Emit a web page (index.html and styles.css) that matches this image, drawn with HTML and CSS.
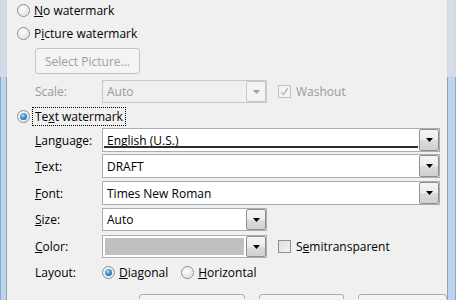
FILE: index.html
```html
<!DOCTYPE html>
<html>
<head>
<meta charset="utf-8">
<link rel="stylesheet" href="styles.css">
</head>
<body>
<div class="window">
  <div class="frame frame-left"></div>
  <div class="content">
    <div class="row r-no"><span class="radio"></span><span class="lbl"><u>N</u>o watermark</span></div>
    <div class="row r-pic"><span class="radio"></span><span class="lbl">P<u>i</u>cture watermark</span></div>
    <div class="sub">
      <div class="btn btn-select">Select Picture...</div>
      <div class="frow r-scale">
        <span class="flabel dis">Scale:</span>
        <div class="combo combo-short combo-dis"><span class="val">Auto</span><span class="drop"><svg width="7" height="4" viewBox="0 0 7 4"><polygon points="0,0 7,0 3.5,4" fill="#a0a0a0"/></svg></span></div>
        <span class="check check-dis"><svg width="11" height="11" viewBox="0 0 11 11"><path d="M2 6 L4.5 8.5 L9 2" fill="none" stroke="#b8b8b8" stroke-width="1.4"/></svg></span>
        <span class="dis">Washout</span>
      </div>
    </div>
    <div class="row r-text"><span class="radio radio-on"><span class="dot"></span></span><span class="lbl focus">Te<u>x</u>t watermark</span></div>
    <div class="sub sub-text">
      <div class="frow r-lang">
        <span class="flabel"><u>L</u>anguage:</span>
        <div class="combo combo-long combo-edit"><span class="val">English (U.S.)</span><span class="uline"></span><span class="drop"><svg width="7" height="4" viewBox="0 0 7 4"><polygon points="0,0 7,0 3.5,4" fill="#000"/></svg></span></div>
      </div>
      <div class="frow r-txt">
        <span class="flabel"><u>T</u>ext:</span>
        <div class="combo combo-long combo-edit"><span class="val">DRAFT</span><span class="drop"><svg width="7" height="4" viewBox="0 0 7 4"><polygon points="0,0 7,0 3.5,4" fill="#000"/></svg></span></div>
      </div>
      <div class="frow r-font">
        <span class="flabel"><u>F</u>ont:</span>
        <div class="combo combo-long combo-edit"><span class="val">Times New Roman</span><span class="drop"><svg width="7" height="4" viewBox="0 0 7 4"><polygon points="0,0 7,0 3.5,4" fill="#000"/></svg></span></div>
      </div>
      <div class="frow r-size">
        <span class="flabel"><u>S</u>ize:</span>
        <div class="combo combo-short"><span class="val">Auto</span><span class="drop"><svg width="7" height="4" viewBox="0 0 7 4"><polygon points="0,0 7,0 3.5,4" fill="#000"/></svg></span></div>
      </div>
      <div class="frow r-color">
        <span class="flabel"><u>C</u>olor:</span>
        <div class="combo combo-short"><span class="swatch"></span><span class="drop"><svg width="7" height="4" viewBox="0 0 7 4"><polygon points="0,0 7,0 3.5,4" fill="#000"/></svg></span></div>
        <span class="check"></span>
        <span>S<u>e</u>mitransparent</span>
      </div>
      <div class="frow r-layout">
        <span class="flabel">Layout:</span>
        <span class="radio radio-on"><span class="dot"></span></span><span class="opt"><u>D</u>iagonal</span>
        <span class="radio radio-h"></span><span class="opt"><u>H</u>orizontal</span>
      </div>
    </div>
    <div class="buttons">
      <div class="btn btn-b1"></div>
      <div class="btn btn-b2"></div>
      <div class="btn btn-b3"></div>
    </div>
  </div>
  <div class="frame frame-right"></div>
</div>
</body>
</html>
```
FILE: styles.css
```css
html, body {
  margin: 0;
  padding: 0;
}
body {
  width: 456px;
  height: 300px;
  overflow: hidden;
  font-family: "Open Sans", "Noto Sans", sans-serif;
  font-size: 12px;
  color: #000;
  background: #f0f0f0;
}
u {
  text-decoration: underline;
  text-underline-offset: 1px;
}
.window {
  display: flex;
  height: 300px;
}
.frame {
  flex: none;
}
.frame-left {
  width: 7px;
  background:
    linear-gradient(to bottom, rgba(215,220,228,0.9) 0, rgba(215,220,228,0.9) 77px, rgba(0,0,0,0) 77px),
    linear-gradient(to right, #8ea6c2 0, #8ea6c2 1px, #bcd4f0 1px, #bcd4f0 6px, #93a1b1 6px, #93a1b1 7px);
}
.frame-right {
  width: 9px;
  background:
    linear-gradient(to bottom, rgba(218,222,230,0.9) 0, rgba(218,222,230,0.9) 77px, rgba(0,0,0,0) 77px),
    linear-gradient(to right, #93a1b1 0, #93a1b1 1px, #bcd4f0 1px, #bcd4f0 8px, #8ea6c2 8px, #8ea6c2 9px);
}
.content {
  flex: 1;
  display: flex;
  flex-direction: column;
  background: #f0f0f0;
  min-width: 0;
  overflow: hidden;
}
.row {
  display: flex;
  align-items: center;
  height: 15px;
  padding-left: 10px;
}
.r-no { margin-top: 3px; }
.r-pic { margin-top: 8px; }
.r-text { margin-top: 6px; }
.lbl {
  margin-left: 4px;
  line-height: 15px;
  white-space: nowrap;
}
.focus {
  outline: 1px dotted #000;
  outline-offset: 1px;
  padding: 0 1px;
}
.radio {
  flex: none;
  width: 11px;
  height: 11px;
  border-radius: 50%;
  border: 1px solid #8d8d8d;
  background: radial-gradient(circle at 40% 35%, #ffffff 0, #f3f3f3 35%, #d8d8d8 75%, #c8c8c8 100%);
  display: flex;
  align-items: center;
  justify-content: center;
  box-shadow: inset 0 0 0 1px #f4f4f4;
}
.radio-on .dot {
  width: 7px;
  height: 7px;
  border-radius: 50%;
  background: radial-gradient(circle at 40% 35%, #b8e4ff 0, #3c9ae0 40%, #11509f 100%);
}
.sub {
  padding-left: 28px;
  display: flex;
  flex-direction: column;
}
.btn {
  box-sizing: border-box;
  border: 1px solid #adadad;
  border-radius: 3px;
  background: #f4f4f4;
}
.btn-select {
  margin-top: 7px;
  width: 105px;
  height: 26px;
  color: #a0a0a0;
  border-color: #c4c4c4;
  display: flex;
  align-items: center;
  justify-content: center;
  line-height: 15px;
}
.frow {
  display: flex;
  align-items: center;
  white-space: nowrap;
}
.flabel {
  width: 67px;
  flex: none;
}
.dis { color: #9a9a9a; }
.r-scale { margin-top: 6px; }
.combo {
  box-sizing: border-box;
  height: 23px;
  border: 1px solid #abadb3;
  background: #fff;
  display: flex;
  align-items: stretch;
  position: relative;
  flex: none;
}
.combo-short { width: 165px; }
.combo-long { width: 338px; }
.combo .val {
  flex: 1;
  padding-left: 4px;
  display: flex;
  align-items: center;
  line-height: 15px;
}
.combo-dis {
  background: #f0f0f0;
  border-color: #c8c8c8;
  color: #9a9a9a;
}
.drop {
  box-sizing: border-box;
  width: 20px;
  flex: none;
  border: 1px solid #8e8f8f;
  border-radius: 2px;
  background: linear-gradient(to bottom, #f4f4f4 0, #ececec 50%, #dcdcdc 51%, #d0d0d0 100%);
  display: flex;
  align-items: center;
  justify-content: center;
  margin-left: auto;
}
.combo-dis .drop {
  border-color: #c8c8c8;
  background: #f4f4f4;
}
.combo-edit {
  height: 24px;
}
.uline {
  position: absolute;
  left: 1px;
  right: 21px;
  bottom: 3px;
  height: 2px;
  background: #2e2e2e;
}
.swatch {
  flex: 1;
  margin: 2px;
  background: #c0c0c0;
}
.check {
  box-sizing: border-box;
  width: 13px;
  height: 13px;
  flex: none;
  border: 1px solid #8e8f8f;
  background: linear-gradient(135deg, #dcdcdc 0, #f4f4f4 100%);
  margin-left: 11px;
  margin-right: 5px;
  display: flex;
  align-items: center;
  justify-content: center;
}
.check-dis {
  border-color: #c4c4c4;
  background: #f4f4f4;
}
.r-lang { margin-top: 4px; }
.r-txt { margin-top: 2px; }
.r-font { margin-top: 3px; }
.r-size { margin-top: 3px; }
.r-color { margin-top: 4px; }
.r-layout { margin-top: 7px; height: 15px; }
.opt {
  margin-left: 4px;
  line-height: 15px;
}
.r-layout .radio-h { margin-left: 13px; }
.buttons {
  display: flex;
  align-items: flex-start;
  padding-left: 132px;
  gap: 14px;
  margin-top: 14px;
  height: 5px;
  overflow: hidden;
  flex: none;
}
.btn-b1 { width: 107px; height: 24px; }
.btn-b2 { width: 86px; height: 24px; }
.btn-b3 { width: 90px; height: 24px; }
```
